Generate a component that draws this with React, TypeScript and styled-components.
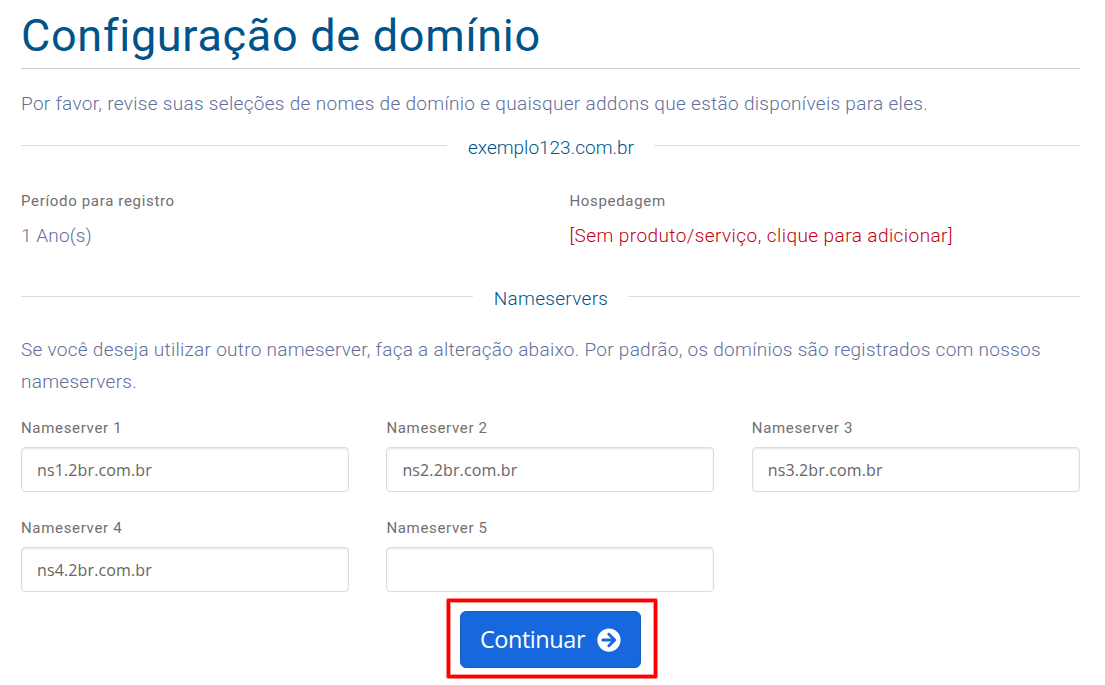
import React, { useState } from 'react'
import styled, { createGlobalStyle } from 'styled-components'
import { FaArrowCircleRight } from 'react-icons/fa'

const GlobalStyle = createGlobalStyle`
    * {
        box-sizing: border-box;
    }
    body {
        margin: 0;
        background: #fff;
        font-family: Roboto, 'Liberation Sans', sans-serif;
        font-weight: 300;
        color: #626e9c;
    }
`

const Page = styled.main`
    width: 1105px;
    height: 685px;
    padding: 0 25px 0 21px;
    overflow: hidden;
`

const Title = styled.h1`
    margin: 0;
    height: 69px;
    padding-top: 6px;
    border-bottom: 1px solid #ccc;
    font-size: 45px;
    line-height: 60px;
    font-weight: 400;
    letter-spacing: 0.7px;
    white-space: nowrap;
    color: #00548a;
`

const Text = styled.p<{ $spacing?: number }>`
    margin: 0;
    font-size: 19px;
    line-height: 32px;
    letter-spacing: ${(props) => props.$spacing ?? 0.31}px;
    white-space: pre-line;
`

const Intro = styled(Text)`
    margin-top: 19px;
`

const ServersText = styled(Text)`
    margin-top: 19px;
`

const Divider = styled.div<{ $top: number; $spacing: number }>`
    display: flex;
    gap: 22px;
    height: 32px;
    margin-top: ${(props) => props.$top}px;
    font-size: 19px;
    line-height: 32px;
    letter-spacing: ${(props) => props.$spacing}px;
    color: #00548a;

    &::before,
    &::after {
        content: '';
        flex: 1;
        height: 1px;
        margin-top: 13px;
        background: #ddd;
    }

    &::after {
        margin-left: -2px;
        margin-right: 0;
    }

    &::before {
        margin-right: -1px;
    }
`

const Details = styled.div`
    display: grid;
    grid-template-columns: 548.5px 1fr;
    margin-top: 24px;
`

const Label = styled.label`
    display: block;
    font-size: 15px;
    line-height: 26px;
    font-weight: 400;
    letter-spacing: 0.67px;
    color: #707070;
`

const DetailValue = styled(Text)`
    margin-top: 6px;
`

const AddLink = styled.a`
    color: #c00010;
    cursor: pointer;
`

const Servers = styled.div`
    display: grid;
    grid-template-columns: repeat(3, 328px);
    gap: 23px 37.4px;
    margin-top: 17px;
`

const Input = styled.input`
    display: block;
    width: 100%;
    height: 45px;
    margin-top: 6px;
    padding: 0 15px;
    border: 1px solid #ddd;
    border-radius: 4px;
    box-shadow: inset 0 1px 2px rgba(0, 0, 0, 0.1);
    font-family: 'Open Sans', sans-serif;
    font-size: 16px;
    letter-spacing: 0.13px;
    color: #666;
    outline: none;
`

const Highlight = styled.div`
    width: 210px;
    height: 79px;
    margin: 7px 0 0 426px;
    padding: 9px 9px 9px 10px;
    border: 3px solid #f00;
    border-radius: 1px;
    box-shadow:
        0 0 0 1px rgba(255, 0, 0, 0.5),
        inset 0 0 0 1px rgba(255, 0, 0, 0.4);
`

const Button = styled.button`
    display: flex;
    align-items: center;
    justify-content: center;
    gap: 12px;
    width: 181px;
    height: 57px;
    padding: 0;
    border: 1px solid #1a5fb8;
    border-radius: 6px;
    background: #1868dd;
    color: #fff;
    font-family: 'Open Sans', sans-serif;
    font-size: 23.5px;
    line-height: 30px;
    letter-spacing: -0.45px;
    cursor: pointer;

    svg {
        width: 24px;
        height: 24px;
    }
`

const ButtonLabel = styled.span`
    padding-bottom: 2px;
`

const initialServers = ['ns1.2br.com.br', 'ns2.2br.com.br', 'ns3.2br.com.br', 'ns4.2br.com.br', '']

const App = () => {
    const [servers, setServers] = useState(initialServers)

    const updateServer = (index: number, value: string) =>
        setServers(servers.map((server, i) => (i === index ? value : server)))

    return (
        <Page>
            <GlobalStyle />
            <Title>Configuração de domínio</Title>
            <Intro>
                Por favor, revise suas seleções de nomes de domínio e quaisquer addons que estão disponíveis para eles.
            </Intro>
            <Divider $top={12} $spacing={0}>
                exemplo123.com.br
            </Divider>
            <Details>
                <div>
                    <Label as="div">Período para registro</Label>
                    <DetailValue $spacing={0.1}>1 Ano(s)</DetailValue>
                </div>
                <div>
                    <Label as="div">Hospedagem</Label>
                    <DetailValue $spacing={0.43}>
                        <AddLink>[Sem produto/serviço, clique para adicionar]</AddLink>
                    </DetailValue>
                </div>
            </Details>
            <Divider $top={31} $spacing={0.3}>
                Nameservers
            </Divider>
            <ServersText $spacing={0.28}>
                {
                    'Se você deseja utilizar outro nameserver, faça a alteração abaixo. Por padrão, os domínios são registrados com nossos\nnameservers.'
                }
            </ServersText>
            <Servers>
                {servers.map((server, i) => (
                    <div key={i}>
                        <Label htmlFor={`ns${i + 1}`}>Nameserver {i + 1}</Label>
                        <Input id={`ns${i + 1}`} value={server} onChange={(e) => updateServer(i, e.target.value)} />
                    </div>
                ))}
            </Servers>
            <Highlight>
                <Button type="button">
                    <ButtonLabel>Continuar</ButtonLabel>
                    <FaArrowCircleRight />
                </Button>
            </Highlight>
        </Page>
    )
}

export default App
